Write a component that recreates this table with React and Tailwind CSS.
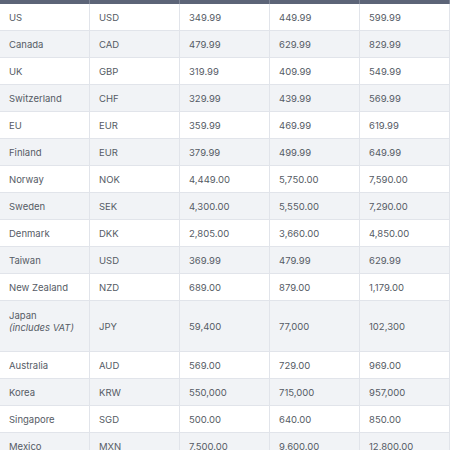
import React from "react"

const rows = [
  ["US", "USD", "349.99", "449.99", "599.99"],
  ["Canada", "CAD", "479.99", "629.99", "829.99"],
  ["UK", "GBP", "319.99", "409.99", "549.99"],
  ["Switzerland", "CHF", "329.99", "439.99", "569.99"],
  ["EU", "EUR", "359.99", "469.99", "619.99"],
  ["Finland", "EUR", "379.99", "499.99", "649.99"],
  ["Norway", "NOK", "4,449.00", "5,750.00", "7,590.00"],
  ["Sweden", "SEK", "4,300.00", "5,550.00", "7,290.00"],
  ["Denmark", "DKK", "2,805.00", "3,660.00", "4,850.00"],
  ["Taiwan", "USD", "369.99", "479.99", "629.99"],
  ["New Zealand", "NZD", "689.00", "879.00", "1,179.00"],
  ["Japan", "JPY", "59,400", "77,000", "102,300"],
  ["Australia", "AUD", "569.00", "729.00", "969.00"],
  ["Korea", "KRW", "550,000", "715,000", "957,000"],
  ["Singapore", "SGD", "500.00", "640.00", "850.00"],
  ["Mexico", "MXN", "7,500.00", "9,600.00", "12,800.00"],
]

const App = () => {
  return (
    <div className="w-[450px] h-[450px] overflow-hidden bg-white font-['Inter',sans-serif] text-[9.5px] text-[#555b65]">
      <div className="grid grid-cols-5 h-[4px] bg-[#5c6477]">
        {[0, 1, 2, 3, 4].map((i) => (
          <div key={i} className="border-r border-[#7d8495]"></div>
        ))}
      </div>
      {rows.map((r, i) => {
        const japan = r[0] === "Japan"
        return (
          <div
            key={i}
            className={`grid grid-cols-5 border-b border-[#e1e4ea] ${i % 2 ? "bg-[#f1f3f6]" : "bg-white"} ${japan ? "h-[51px]" : "h-[27px]"}`}
          >
            {r.map((c, j) => (
              <div
                key={j}
                className={`flex flex-col justify-center px-[9px] pt-px border-r border-[#e1e4ea] leading-[12px] ${japan && j === 0 ? "pb-[10px]" : ""}`}
              >
                <span>{c}</span>
                {japan && j === 0 && <span className="italic">(includes VAT)</span>}
              </div>
            ))}
          </div>
        )
      })}
    </div>
  )
}

export default App
